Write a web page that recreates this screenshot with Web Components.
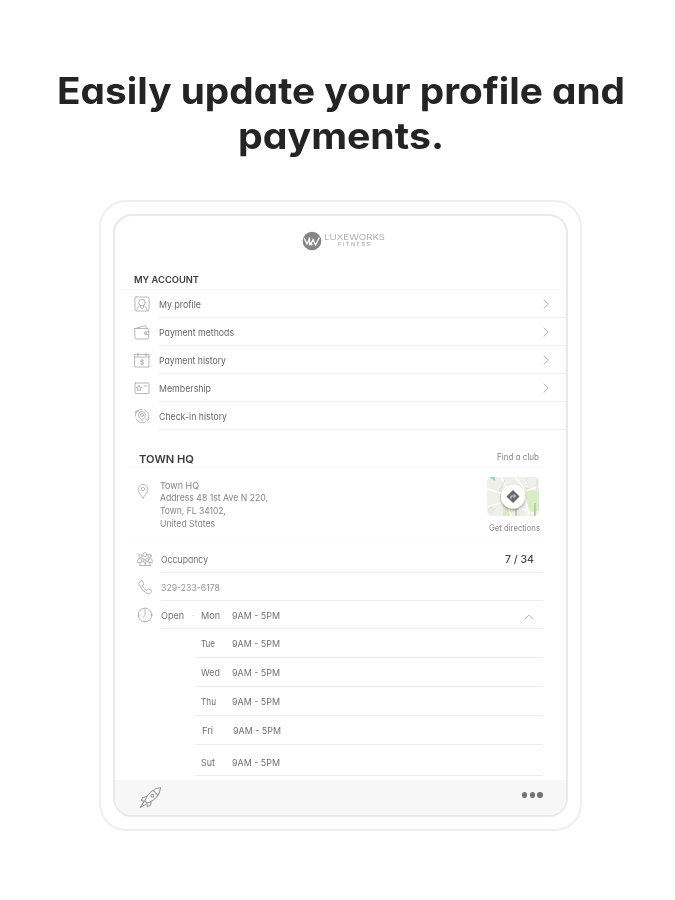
<!DOCTYPE html>
<html lang="en">
<head>
<meta charset="utf-8">
<title>Profile and payments</title>
<style>
html,body{margin:0;background:#fff}
body{width:675px;height:900px;overflow:hidden;font-family:Inter,"Open Sans",sans-serif;font-feature-settings:"cv11" 1}
</style>
</head>
<body>
<promo-page></promo-page>
<script>
const define = (name, html, setup) => {
  const tpl = document.createElement('template');
  tpl.innerHTML = html;
  customElements.define(name, class extends HTMLElement {
    connectedCallback() {
      if (this.shadowRoot) return;
      this.attachShadow({ mode: 'open' }).append(tpl.content.cloneNode(true));
      if (setup) setup(this, this.shadowRoot);
    }
  });
};

/* Text set to an exact measure: <fit-text w="70"> */
define('fit-text', `<style>
:host{display:block;white-space:nowrap;flex:none}
span{display:inline-block;transform-origin:0 50%}
</style><span><slot></slot></span>`, (el, root) => {
  const w = +el.getAttribute('w'), s = root.querySelector('span');
  el.style.width = w + 'px';
  const own = s.offsetWidth && s.getBoundingClientRect().width;
  if (own) s.style.transform = 'scaleX(' + w / own + ')';
});

const icons = {
  profile: '<rect x="1" y="1" width="14" height="14" rx="1"/><circle cx="8" cy="6.5" r="3.3"/><path d="M3 14c0-3 2-4 3.5-4.3M13 14c0-3-2-4-3.500-4.300M6.500 9.500v2l1.500 1.200 1.500-1.200v-2"/>',
  wallet: '<path d="M1 4.500h12.500q1.200 0 1.200 1.200V14q0 1-1 1H2q-1 0-1-1zM1.200 4.500 11.500 1.600l1.200 2.900M14.700 7.800h-3q-1.400 0-1.400 1.400t1.400 1.400h3"/><circle cx="12" cy="9.200" r=".3"/>',
  calendar: '<path d="M1 2.500h14V15H1zM1 5h14M4 1v3M12 1v3M8 7v6M9.500 8.300q-3-1-3 .5T8 10t1.500 1.500-3 .5"/>',
  card: '<rect x="1" y="3" width="14" height="10.500" rx=".6"/><path d="m5 5.500.8 1.800 2 .2-1.500 1.300.4 2L5 9.800l-1.700 1 .4-2-1.500-1.300 2-.2zM10.500 6h2.500"/>',
  checkin: '<path d="M2 11A6.700 6.700 0 0 0 11.500 14M1.300 8A6.700 6.700 0 0 1 8 1.300M10.500 1.800A6.700 6.700 0 0 1 14 11M1 5l1.200-2.200L4.500 3M15 11l-1.500 1.500L11.500 11"/><path d="M8 12.200C5.500 9.500 4.600 8.500 4.600 7a3.400 3.400 0 0 1 6.800 0c0 1.500-.9 2.500-3.400 5.200z"/><circle cx="8" cy="7" r="1.500"/>',
  pin: '<path d="M8 15C4.500 10.500 3.200 8.500 3.200 6.200a4.800 4.800 0 0 1 9.600 0C12.800 8.500 11.500 10.500 8 15z"/><circle cx="8" cy="6" r="1.700"/>',
  people: '<circle cx="8" cy="3.600" r="2"/><circle cx="3.500" cy="5" r="1.700"/><circle cx="12.500" cy="5" r="1.700"/><circle cx="5.700" cy="8.800" r="1.600"/><circle cx="10.300" cy="8.800" r="1.600"/><path d="M.8 11V9.500q0-2.300 2.500-2.500M15.200 11V9.500q0-2.300-2.500-2.500M3 14.500v-1.800q.3-2 2.700-2t2.500 2v1.800M8.200 12.700q.1-2 2.200-2 2.400 0 2.700 2v1.800M.8 11.500h2.500M12.700 11.500h2.500M3 14.500h10"/>',
  phone: '<path d="M4.500 1.500 2.500 2.700Q1.300 4 2.300 6.200 5.500 12.500 10.500 14.600q2 .6 3.300-.8l.8-1.300q.2-.8-.5-1.300l-2.300-1.200q-.8-.3-1.300.4l-.8 1Q6.500 9.500 5.300 6.800l1-.8q.6-.6.2-1.400L5.600 2q-.4-.7-1.100-.5z"/>',
  clock: '<circle cx="8" cy="8" r="6.900"/><path d="M8 3.200v5l-1.500 2M8 1.500v.8M8 13.700v.8M1.500 8h.8M13.700 8h.8"/>',
  right: '<path d="m6 4 4.300 4.100L6 12.200"/>',
  up: '<path d="m4 10 4-4 4 4"/>',
  rocket: '<path d="M4 10.300C6 5.500 9 1.800 15 1c-.4 5.800-4.500 9.200-9.300 11zM10 3.200l2.800 2.800M5.300 7.300 2.500 8 1.600 10.300l2.400.2M8.500 10.800 8 13.300l-2.200 1.200-.3-2.500M3.300 11.200.8 15l3.700-2.200"/><circle cx="9.300" cy="6.800" r="1"/>'
};
define('line-icon', `<style>
:host{display:block;flex:none;width:16px;height:16px;color:#a2a2a2}
svg{display:block;width:100%;height:100%;fill:none;stroke:currentColor;stroke-width:.75;stroke-linejoin:round;stroke-linecap:round}
</style><svg viewBox="0 0 16 16"></svg>`, (el, root) => {
  root.querySelector('svg').innerHTML = icons[el.getAttribute('name')];
});

define('brand-logo', `<style>
:host{display:flex;justify-content:center;gap:2px;height:20px;color:#a0a0a0}
svg{display:block;width:20px;height:20px}
div{width:61px;padding-top:3px;box-sizing:border-box}
.a{font-size:7.500px;line-height:8px;color:#9b9b9b;font-weight:300}
.b{font-size:4.500px;line-height:5px;margin-left:14px}
</style>
<svg viewBox="0 0 20 20"><circle cx="10" cy="10" r="9.300" fill="#858585"/><path d="M2 7l3 6 1.800-4L9 13l2-4.500L13.500 14l3.800-7.500M7.500 6v7.500h3" fill="none" stroke="#fff" stroke-width="1.300"/></svg>
<div><fit-text class="a" w="61">LUXEWORKS</fit-text><fit-text class="b" w="32">F I T N E S S</fit-text></div>`);

/* Account menu entry */
define('menu-row', `<style>
:host{display:flex;height:28px;padding-left:19px}
line-icon{margin:6px 8px 0 0}
.r{flex:1;display:flex;justify-content:space-between;align-items:center;border-bottom:1.500px solid #eff1f1;box-sizing:border-box;padding:1px 12px 0 1px;font-size:9.200px;color:#666}
.r line-icon{margin:0;color:#999}
</style><line-icon></line-icon><div class="r"><slot></slot></div>`, (el, root) => {
  root.querySelector('line-icon').replaceWith(Object.assign(document.createElement('line-icon')));
  const old = root.querySelector('line-icon'), next = document.createElement('line-icon');
  next.setAttribute('name', el.getAttribute('icon'));
  old.replaceWith(next);
  if (el.hasAttribute('go')) {
    const c = document.createElement('line-icon');
    c.setAttribute('name', 'right');
    root.querySelector('.r').append(c);
  }
});

/* Club entry with an icon */
define('info-row', `<style>
:host{display:flex;padding-left:22px;padding-right:23px;box-sizing:border-box;font-size:9.200px;color:#727272}
::slotted([slot=icon]){margin:6px 8px 0 0}
.r{flex:1;display:flex;align-items:center;border-bottom:1px solid #efefef;box-sizing:border-box;padding:1px 0 0}
</style><slot name="icon"></slot><div class="r"><slot></slot></div>`);

define('day-row', `<style>
:host{display:flex;align-items:center;margin-left:80px;margin-right:23px;box-sizing:border-box;border-bottom:1px solid #ededed;font-size:9.200px;color:#707070;padding-left:6px}
b{font-weight:400;width:30.500px;flex:none}
</style><b><slot name="day"></slot></b><slot></slot>`);

define('map-card', `<style>
:host{display:block;width:54px;color:#888}
svg{display:block;width:53px;height:40px}
fit-text{font-size:8.500px;line-height:11px;margin:6px 0 0 2px}
</style>
<svg viewBox="0 0 53 40"><defs><clipPath id="c"><rect width="52" height="39" rx="5"/></clipPath><filter id="s" x="-30%" y="-30%" width="160%" height="170%"><feDropShadow dx="0" dy="1.500" stdDeviation="1.500" flood-opacity=".4"/></filter></defs>
<g clip-path="url(#c)"><path fill="#f0f0eb" d="M0 0h53v40H0z"/><path fill="#d9edc4" d="M38 10l14 5v18l-8 4-4-12zM16 27h8v12h-8z"/><path fill="#8ed4d8" d="M2 0h6v4z"/><path d="M0 12l18 5 6 22M14 0l6 12M28 0l8 10 6 29M42 0l-4 7M0 30l16-5M39 14l14-5M31 30l21 9" fill="none" stroke="#fff" stroke-width="1.300"/><path d="M38 5l4-5M25 31l8 8M50 0v14M12 15l6-12" stroke="#d8dbd5" stroke-width=".9"/><path d="M48 26v13M29 32v7" stroke="#bad39b" stroke-width="2"/><circle cx="4" cy="33" r="2.500" fill="none" stroke="#dedfdb"/></g>
<circle cx="26" cy="19.500" r="12" fill="#fff" filter="url(#s)"/><path d="M26 13l6.500 6.500L26 26l-6.500-6.500z" fill="#666"/><path d="M24 22v-3h4M26.500 17l2 2-2 2" fill="none" stroke="#ddd" stroke-width="1"/></svg>
<fit-text w="51">Get directions</fit-text>`);

define('tab-bar', `<style>
:host{display:flex;justify-content:space-between;box-sizing:border-box;background:#f7f7f7;height:35px;padding:6px 23px 0 24px}
line-icon{width:23px;height:23px;color:#999}
.d{display:flex;gap:2.200px;padding-top:6px}
i{width:5.600px;height:5.600px;border-radius:50%;background:#737373}
</style><line-icon name="rocket"></line-icon><div class="d"><i></i><i></i><i></i></div>`);

define('tablet-frame', `<style>
:host{display:block;box-sizing:border-box;width:483px;height:631px;border:2px solid #efefef;border-radius:27px;padding:12px}
.s{box-sizing:border-box;width:455px;height:603px;border:2px solid #e9e9e9;border-radius:19px;overflow:hidden;display:flex;flex-direction:column}
</style><div class="s"><slot></slot></div>`);

define('promo-page', `<style>
:host{display:flex;flex-direction:column;align-items:center;width:675px;height:900px;background:#fff;box-sizing:border-box;padding-left:6px}
h1{margin:68px 0 0;font-size:37px;line-height:45px;font-weight:700;color:#242424;display:flex;flex-direction:column;align-items:center}
tablet-frame{margin-top:42px}
brand-logo{margin:15px 0 0 5px}
h2{margin:0;font-weight:600;display:flex;align-items:center;box-sizing:border-box;border-bottom:1px solid #f8f8f8;color:#3c3c3c}
.acc{height:20px;margin:19px 0 0;padding:0 0 0 19px;font-size:9.500px}
.club{height:22px;margin:16px 23px 0 12px;padding:4px 4px 0 12px;font-size:11px;justify-content:space-between}
.club .f{font-weight:400;font-size:8.700px;color:#858585;margin-top:-3px}
.addr{display:flex;height:74px;box-sizing:border-box;margin:0 23px 0 12px;padding:9px 0 0 8px;border-bottom:1px solid #f8f8f8;color:#858585;font-size:9.200px;line-height:12.700px}
.addr line-icon{margin:6px 9px 0 0;width:16px;height:16px}
.addr .t{flex:1;padding-top:2.500px}
map-card{margin-right:2px}
.n{margin-left:auto;margin-right:9px;color:#4a4a4a;font-weight:500;font-size:10.500px}
.up{margin-left:auto;margin-right:6px;margin-top:4px;color:#aaa}
tab-bar{margin-top:auto}
</style>
<h1><fit-text w="568">Easily update your profile and</fit-text><fit-text w="206">payments.</fit-text></h1>
<tablet-frame>
<brand-logo></brand-logo>
<h2 class="acc"><fit-text w="65">MY ACCOUNT</fit-text></h2>
<menu-row icon="profile" go><fit-text w="42">My profile</fit-text></menu-row>
<menu-row icon="wallet" go><fit-text w="75">Payment methods</fit-text></menu-row>
<menu-row icon="calendar" go><fit-text w="67">Payment history</fit-text></menu-row>
<menu-row icon="card" go><fit-text w="52">Membership</fit-text></menu-row>
<menu-row icon="checkin"><fit-text w="68">Check-in history</fit-text></menu-row>
<h2 class="club"><fit-text w="55">TOWN HQ</fit-text><fit-text class="f" w="42">Find a club</fit-text></h2>
<div class="addr"><line-icon name="pin"></line-icon><div class="t"><fit-text w="39">Town HQ</fit-text><fit-text w="108">Address 48 1st Ave N 220,</fit-text><fit-text w="66">Town, FL 34102,</fit-text><fit-text w="55">United States</fit-text></div><map-card></map-card></div>
<info-row style="height:31px;padding-top:3px"><line-icon slot="icon" name="people"></line-icon><fit-text w="47">Occupancy</fit-text><fit-text class="n" w="29">7 / 34</fit-text></info-row>
<info-row style="height:28px;color:#929292"><line-icon slot="icon" name="phone"></line-icon><fit-text w="59">329-233-6178</fit-text></info-row>
<info-row style="height:28px"><line-icon slot="icon" name="clock"></line-icon><fit-text w="23">Open</fit-text><fit-text w="2" style="margin:0 7px 0 8px;color:#bbb">·</fit-text><fit-text w="19" style="margin-right:12px">Mon</fit-text><fit-text w="48">9AM - 5PM</fit-text><line-icon class="up" name="up"></line-icon></info-row>
<day-row style="height:29px"><fit-text slot="day" w="14">Tue</fit-text><fit-text w="48">9AM - 5PM</fit-text></day-row>
<day-row style="height:29px"><fit-text slot="day" w="19">Wed</fit-text><fit-text w="48">9AM - 5PM</fit-text></day-row>
<day-row style="height:29px"><fit-text slot="day" w="15">Thu</fit-text><fit-text w="48">9AM - 5PM</fit-text></day-row>
<day-row style="height:29px;padding-left:7px"><fit-text slot="day" w="11">Fri</fit-text><fit-text w="48">9AM - 5PM</fit-text></day-row>
<day-row style="height:31px;padding-top:4px"><fit-text slot="day" w="14">Sut</fit-text><fit-text w="48">9AM - 5PM</fit-text></day-row>
<tab-bar></tab-bar>
</tablet-frame>`);
</script>
</body>
</html>
